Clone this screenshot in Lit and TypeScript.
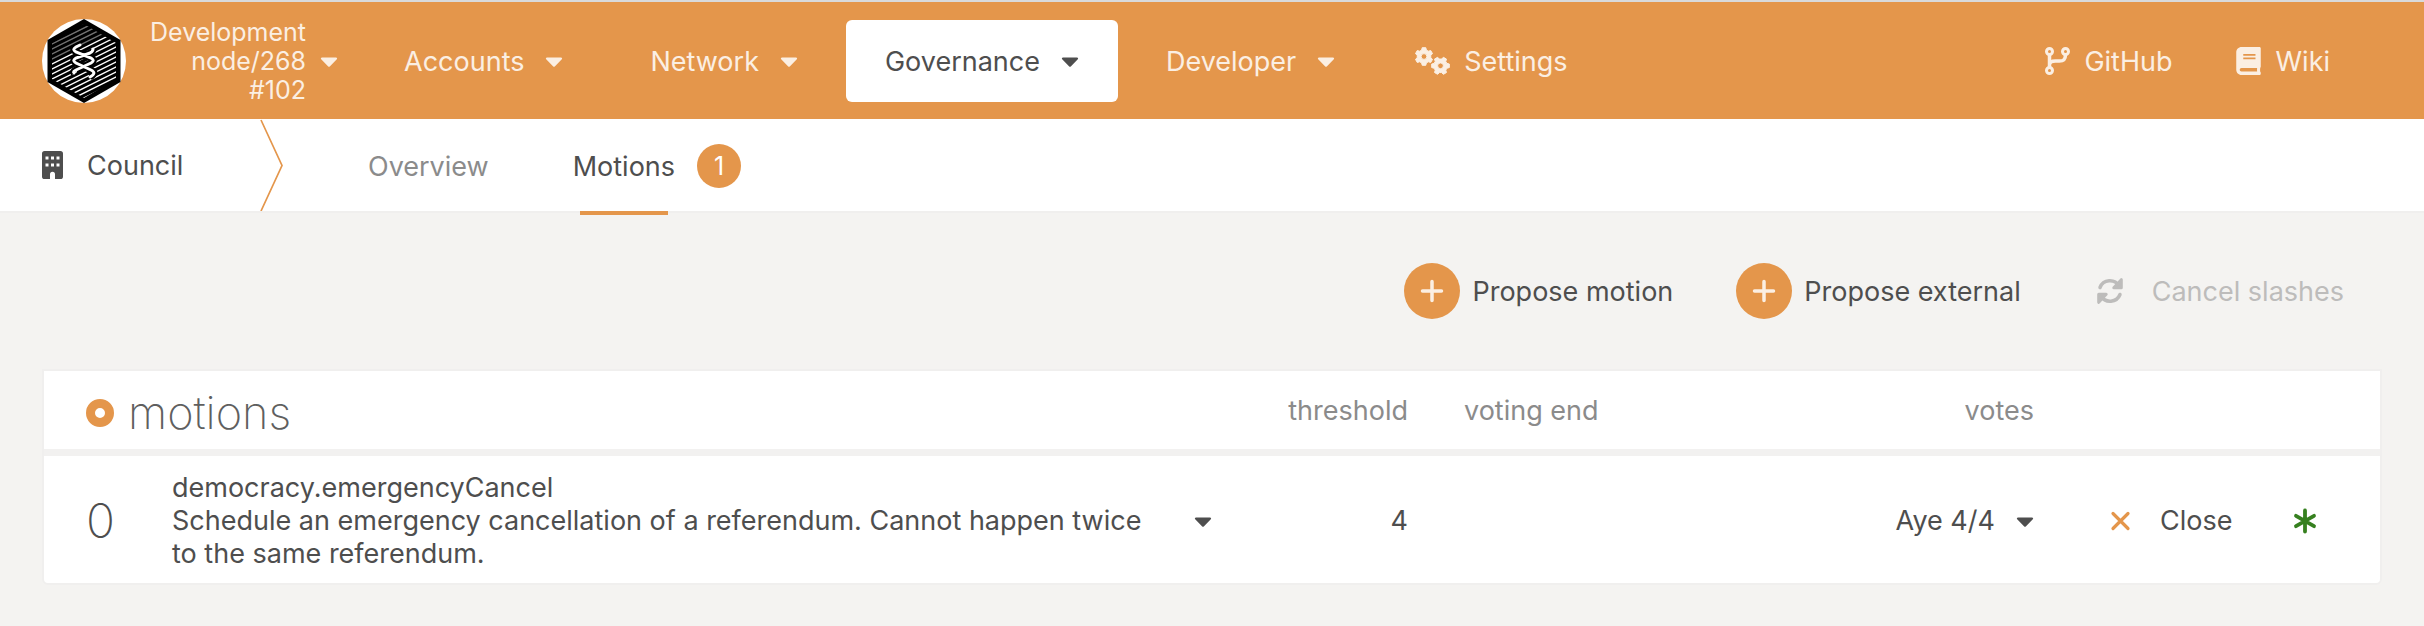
import { LitElement, html, css, svg } from "lit";
import { customElement } from "lit/decorators.js";

/** Outline of a six-toothed cog with a round hole, centred on (cx, cy). */
function cog(cx: number, cy: number, r: number, turn: number): string {
  const inner = r * 0.76;
  const pts: string[] = [];
  for (let i = 0; i < 6; i++) {
    const a = turn + (i * Math.PI) / 3;
    for (const [da, rad] of [[-0.36, inner], [-0.2, r], [0.2, r], [0.36, inner]]) {
      pts.push(`${(cx + rad * Math.cos(a + da)).toFixed(2)} ${(cy + rad * Math.sin(a + da)).toFixed(2)}`);
    }
  }
  const h = r * 0.32;
  return `M${pts.join("L")}ZM${cx - h} ${cy}a${h} ${h} 0 1 0 ${2 * h} 0a${h} ${h} 0 1 0 ${-2 * h} 0Z`;
}

const caret = html`<svg class="caret" viewBox="0 0 320 512" aria-hidden="true">
  <path d="M31.3 192h257.3c17.8 0 26.7 21.5 14.1 34.1L174.1 354.8c-7.8 7.8-20.5 7.8-28.3 0L17.2 226.1C4.6 213.5 13.5 192 31.3 192z"/>
</svg>`;

const cogs = html`<svg class="icon-wide" viewBox="0 0 35 28" aria-hidden="true">
  <path fill-rule="evenodd" stroke="currentColor" stroke-width="1" stroke-linejoin="round"
    d="${cog(9, 9.5, 9, Math.PI / 2)}${cog(25.5, 18.8, 9, 0)}"/>
</svg>`;

const branch = html`<svg class="icon-mid" viewBox="0 0 25 28" aria-hidden="true">
  <g fill="none" stroke="currentColor" stroke-width="3">
    <circle cx="4.5" cy="4.5" r="3"/><circle cx="4.5" cy="23.5" r="3"/><circle cx="20.5" cy="4.5" r="3"/>
    <path stroke-width="3.5" d="M4.5 7.5v13M20.5 7.5c0 5-2 6.5-6 6.5h-4c-4 0-6 1.5-6 4"/>
  </g>
</svg>`;

const book = html`<svg class="icon-mid" viewBox="0 0 448 512" aria-hidden="true">
  <path d="M448 360V24c0-13.3-10.7-24-24-24H96C43 0 0 43 0 96v320c0 53 43 96 96 96h328c13.3 0 24-10.7 24-24v-16c0-7.5-3.5-14.3-8.9-18.7-4.2-15.4-4.2-59.3 0-74.7 5.4-4.3 8.9-11.1 8.9-18.6zM128 134c0-3.3 2.7-6 6-6h212c3.3 0 6 2.7 6 6v20c0 3.3-2.7 6-6 6H134c-3.3 0-6-2.7-6-6v-20zm0 64c0-3.3 2.7-6 6-6h212c3.3 0 6 2.7 6 6v20c0 3.3-2.7 6-6 6H134c-3.3 0-6-2.7-6-6v-20zm253.4 250H96c-17.7 0-32-14.3-32-32 0-17.6 14.4-32 32-32h285.4c-1.9 17.1-1.9 46.9 0 64z"/>
</svg>`;

const building = html`<svg class="icon-slim" viewBox="0 0 21 28" aria-hidden="true">
  <path fill-rule="evenodd" d="M2.6 0h15.8A2.6 2.6 0 0 1 21 2.6v22.8A2.6 2.6 0 0 1 18.4 28H13v-4.7a2.5 2.5 0 0 0-5 0V28H2.6A2.6 2.6 0 0 1 0 25.4V2.6A2.6 2.6 0 0 1 2.6 0zM3.5 5.5v3h3v-3zM9 5.5v3h3v-3zM14.5 5.5v3h3v-3zM3.5 12.5v3h3v-3zM9 12.5v3h3v-3zM14.5 12.5v3h3v-3z"/>
</svg>`;

const plus = html`<svg class="icon" viewBox="0 0 28 28" aria-hidden="true">
  <path d="M14 4.5v19M4.5 14h19" fill="none" stroke="currentColor" stroke-width="3.5" stroke-linecap="round"/>
</svg>`;

const refresh = html`<svg class="icon" viewBox="0 0 28 28" aria-hidden="true">
  <g fill="none" stroke="currentColor" stroke-width="3.5" stroke-linecap="round" stroke-linejoin="round">
    <path d="M4 10.5A10.600 10.600 0 0 1 23 9"/>
    <path d="M24 17.5A10.600 10.600 0 0 1 5 19"/>
    <path d="M25.3 2.7v8H17.8zM2.7 25.3v-8H10.2z" stroke-width="3" fill="currentColor"/>
  </g>
</svg>`;

const cross = html`<svg class="icon-slim cross" viewBox="0 0 21 28" aria-hidden="true">
  <path d="M3 6.500l15 15M18 6.500l-15 15" fill="none" stroke="currentColor" stroke-width="3.200" stroke-linecap="round"/>
</svg>`;

const asterisk = html`<svg class="icon aye" viewBox="0 0 28 28" role="img" aria-label="Voting">
  <path d="M14 3.500v21M5 8.800l18 10.400M23 8.800l-18 10.400" fill="none" stroke="currentColor" stroke-width="3.800" stroke-linecap="round"/>
</svg>`;

const stripes = Array.from({ length: 20 }, (_, i) => 2 + i * 5);

const helix = "M38 26l-4 2c-3 2-3 3 0 5l15 6c3 2 3 3 0 5l-15 7c-2 1-3 2-2 3M51 30c0 2-1 3-3 4l-14 5c-3 2-3 3 0 5l15 7c4 2 4 4-1 7";

const logo = html`<svg class="logo" viewBox="0 0 84 84" role="img" aria-label="Substrate">
  <defs><clipPath id="hex"><path d="M42 5 74 24V60L42 79 10 60V24z"/></clipPath></defs>
  <circle cx="42" cy="42" r="42" fill="#fff"/>
  <path d="M42 0 78.5 21V63L42 84 5.5 63V21z" fill="#000"/>
  <g clip-path="url(#hex)" stroke="#fff" stroke-width="1.5">
    ${stripes.map((y) => svg`<path d=${`M8 ${y + 14}L76 ${y - 20}`} opacity=${y < 30 ? 0.45 : 1} />`)}
  </g>
  <path d=${helix} fill="none" stroke="#000" stroke-width="7"/>
  <path d=${helix} fill="none" stroke="#fff" stroke-width="3" stroke-linecap="round"/>
</svg>`;

@customElement("app-root")
export class AppRoot extends LitElement {
  static styles = css`
    :host {
      display: block;
      min-height: 100vh;
      background: #f4f3f1;
      color: #4e4e4e;
      font: 400 27px/33px Inter, "Liberation Sans", sans-serif;
    }
    * { box-sizing: border-box; }
    a { color: inherit; text-decoration: none; }
    button { font: inherit; color: inherit; background: none; border: 0; padding: 0; display: flex; align-items: center; }
    svg { display: block; flex: none; fill: currentColor; }
    .caret { width: 18px; height: 28px; }
    .icon { width: 28px; height: 28px; }
    .icon-wide { width: 35px; height: 28px; }
    .icon-mid { width: 25px; height: 28px; }
    .icon-slim { width: 21px; height: 28px; }

    .top {
      display: flex;
      align-items: center;
      height: 119px;
      padding: 1px 54px 0 42px;
      border-top: 2px solid #d9dadb;
      background: #e4964b;
      color: #fbefe3;
    }
    .logo { width: 84px; height: 84px; }
    .chain { gap: 14px; margin: 0 27px 0 24px; font-size: 25px; line-height: 29px; text-align: right; }
    .chain span { display: block; }
    .nav { display: flex; flex: 1; gap: 9px; }
    .nav a { display: flex; align-items: center; gap: 21px; height: 82px; padding: 0 39px; border-radius: 6px; }
    .nav .current { background: #fff; color: #4e4e4e; }
    .nav .plain { gap: 14px; padding: 0 32px; }
    .links { display: flex; gap: 64px; padding-right: 40px; }
    .links a { display: flex; align-items: center; gap: 14px; }

    .tabs { display: flex; height: 94px; padding-left: 42px; background: #fff; border-bottom: 2px solid #f0efee; }
    .section { display: flex; align-items: center; gap: 24px; width: 218px; }
    .chevron { width: 24px; height: 92px; fill: none; }
    .tab { display: flex; align-items: center; gap: 22px; margin-left: 84px; color: #8b8b8b; height: 94px; }
    .tab.active { color: #4e4e4e; }
    .tab .label { display: flex; align-items: center; height: 96px; position: relative; }
    .tab.active .label::after { content: ""; position: absolute; left: 7px; right: 7px; bottom: -1px; height: 4px; background: #e4964b; }
    .badge { display: grid; place-items: center; width: 44px; height: 44px; border-radius: 50%; background: #e4964b; color: #fff; font-size: 25px; }

    .actions { display: flex; justify-content: flex-end; align-items: center; height: 156px; padding-right: 38px; gap: 63px; }
    .actions button { gap: 12px; }
    .disc { display: grid; place-items: center; width: 56px; height: 56px; border-radius: 50%; background: #e4964b; color: #fbefe3; }
    .actions button:disabled { color: #bdbcbb; gap: 28px; padding-left: 12px; }

    .content { padding: 0 42px 41px; }
    table { width: 100%; border-collapse: separate; border-spacing: 0; table-layout: fixed; background: #fff; border: 2px solid #f0efee; border-radius: 0 0 6px 6px; }
    th, td { padding: 0; font-weight: 400; text-align: left; vertical-align: middle; }
    th { height: 85px; border-bottom: 7px solid #f2f1f0; color: #8b8b8b; }
    td { height: 127px; padding-top: 2px; }
    .c-id { width: 128px; }
    .c-thr { width: 160px; }
    .c-end { width: 376px; }
    .c-votes { width: 250px; }
    .c-close { width: 257px; }
    .c-mark { width: 89px; }
    .title { display: flex; align-items: center; gap: 14px; margin: 0; padding: 6px 0 0 42px; font-size: 45px; line-height: 56px; font-weight: 200; color: #5f5f5f; }
    .ring { width: 28px; height: 28px; border: 9px solid #e4964b; border-radius: 50%; }
    .id { padding-left: 42px; font-size: 48px; font-weight: 200; }
    .proposal { display: flex; align-items: center; justify-content: space-between; width: 1040px; }
    .proposal p { margin: 0; width: 980px; }
    .right { text-align: right; }
    .start { padding-left: 56px; }
    .votes { margin-left: auto; gap: 21px; }
    .close { gap: 29px; margin-left: 76px; }
    .cross { color: #e4964b; }
    .aye { color: #36801f; }
  `;

  render() {
    const menus = ["Accounts", "Network", "Governance", "Developer"];
    return html`
      <header class="top">
        ${logo}
        <button class="chain"><span><span>Development</span><span>node/268</span><span>#102</span></span>${caret}</button>
        <nav class="nav" aria-label="Main">
          ${menus.map((m) => html`<a href="#" class=${m === "Governance" ? "current" : ""}>${m}${caret}</a>`)}
          <a href="#" class="plain">${cogs}Settings</a>
        </nav>
        <div class="links">
          <a href="#">${branch}GitHub</a>
          <a href="#">${book}Wiki</a>
        </div>
      </header>
      <nav class="tabs" aria-label="Council">
        <div class="section">${building}Council</div>
        <svg class="chevron" viewBox="0 0 24 92" aria-hidden="true"><path d="M1 1l21 45.5L1 92" stroke="#e4964b" stroke-width="1.7"/></svg>
        <a href="#" class="tab"><span class="label">Overview</span></a>
        <a href="#" class="tab active"><span class="label">Motions</span><span class="badge">1</span></a>
      </nav>
      <main class="content">
        <div class="actions">
          <button><span class="disc">${plus}</span>Propose motion</button>
          <button><span class="disc">${plus}</span>Propose external</button>
          <button disabled>${refresh}Cancel slashes</button>
        </div>
        <table>
          <colgroup>
            <col class="c-id"><col><col class="c-thr"><col class="c-end"><col class="c-votes"><col class="c-close"><col class="c-mark">
          </colgroup>
          <thead>
            <tr>
              <th colspan="2"><h1 class="title"><span class="ring"></span>motions</h1></th>
              <th class="right">threshold</th>
              <th class="start">voting end</th>
              <th class="right">votes</th>
              <th></th>
              <th></th>
            </tr>
          </thead>
          <tbody>
            <tr>
              <td class="id">0</td>
              <td><div class="proposal"><p>democracy.emergencyCancel<br>Schedule an emergency cancellation of a referendum. Cannot happen twice to the same referendum.</p><button aria-label="Show details">${caret}</button></div></td>
              <td class="right">4</td>
              <td></td>
              <td><button class="votes">Aye 4/4${caret}</button></td>
              <td><button class="close">${cross}Close</button></td>
              <td>${asterisk}</td>
            </tr>
          </tbody>
        </table>
      </main>
    `;
  }
}
